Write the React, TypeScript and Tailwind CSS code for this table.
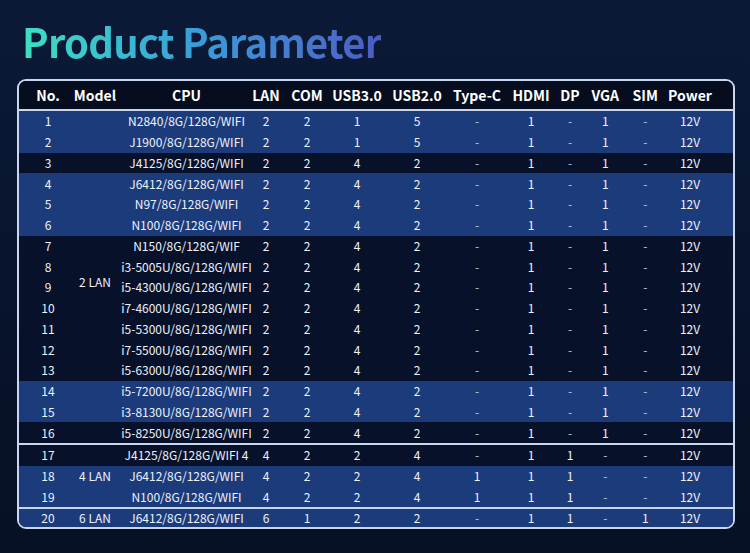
import React from 'react'

type Row = { no: number; cpu: string; vals: string[]; blue: boolean }

// column widths add up to the 714px inner width; padding nudges each centre
const cols = [
  { w: '52.5px', pad: 'pl-[5.5px]' },
  { w: '69.5px', pad: 'pr-[22.5px]' },
  { w: '85.5px', pad: 'pl-[5.5px]' },
  { w: '60px', pad: 'pl-[19px]' },
  { w: '45.5px', pad: 'pr-[4.5px]' },
  { w: '55px', pad: 'pr-[5px]' },
  { w: '60px', pad: '' },
  { w: '57px', pad: 'pl-[3px]' },
  { w: '46.5px', pad: 'pl-[7.5px]' },
  { w: '37px', pad: 'pl-[2px]' },
  { w: '37.5px', pad: 'pr-[2px]' },
  { w: '42.5px', pad: 'pr-[2px]' },
  { w: '65.5px', pad: 'pr-[20.5px]' },
]

const headers = ['No.', 'Model', 'CPU', 'LAN', 'COM', 'USB3.0', 'USB2.0', 'Type-C', 'HDMI', 'DP', 'VGA', 'SIM', 'Power']

const std = ['2', '2', '4', '2', '-', '1', '-', '1', '-', '12V']

const groups: { model: string; shift: string; rows: Row[] }[] = [
  {
    model: '2 LAN',
    shift: 'pt-[10px]',
    rows: [
      { no: 1, cpu: 'N2840/8G/128G/WIFI', vals: ['2', '2', '1', '5', '-', '1', '-', '1', '-', '12V'], blue: true },
      { no: 2, cpu: 'J1900/8G/128G/WIFI', vals: ['2', '2', '1', '5', '-', '1', '-', '1', '-', '12V'], blue: true },
      { no: 3, cpu: 'J4125/8G/128G/WIFI', vals: std, blue: false },
      { no: 4, cpu: 'J6412/8G/128G/WIFI', vals: std, blue: true },
      { no: 5, cpu: 'N97/8G/128G/WIFI', vals: std, blue: true },
      { no: 6, cpu: 'N100/8G/128G/WIFI', vals: std, blue: true },
      { no: 7, cpu: 'N150/8G/128G/WIF', vals: std, blue: false },
      { no: 8, cpu: 'i3-5005U/8G/128G/WIFI', vals: std, blue: false },
      { no: 9, cpu: 'i5-4300U/8G/128G/WIFI', vals: std, blue: false },
      { no: 10, cpu: 'i7-4600U/8G/128G/WIFI', vals: std, blue: false },
      { no: 11, cpu: 'i5-5300U/8G/128G/WIFI', vals: std, blue: false },
      { no: 12, cpu: 'i7-5500U/8G/128G/WIFI', vals: std, blue: false },
      { no: 13, cpu: 'i5-6300U/8G/128G/WIFI', vals: std, blue: false },
      { no: 14, cpu: 'i5-7200U/8G/128G/WIFI', vals: std, blue: true },
      { no: 15, cpu: 'i3-8130U/8G/128G/WIFI', vals: std, blue: true },
      { no: 16, cpu: 'i5-8250U/8G/128G/WIFI', vals: std, blue: false },
    ],
  },
  {
    model: '4 LAN',
    shift: '',
    rows: [
      { no: 17, cpu: 'J4125/8G/128G/WIFI 4', vals: ['4', '2', '2', '4', '-', '1', '1', '-', '-', '12V'], blue: false },
      { no: 18, cpu: 'J6412/8G/128G/WIFI', vals: ['4', '2', '2', '4', '1', '1', '1', '-', '-', '12V'], blue: true },
      { no: 19, cpu: 'N100/8G/128G/WIFI', vals: ['4', '2', '2', '4', '1', '1', '1', '-', '-', '12V'], blue: true },
    ],
  },
  {
    model: '6 LAN',
    shift: '',
    rows: [
      { no: 20, cpu: 'J6412/8G/128G/WIFI', vals: ['6', '1', '2', '2', '-', '1', '1', '-', '1', '12V'], blue: true },
    ],
  },
]

const gridCols = 'grid grid-cols-[52.5px_69.5px_85.5px_60px_45.5px_55px_60px_57px_46.5px_37px_37.5px_42.5px_65.5px]'

const App: React.FC = () => {
  return (
    <div
      className="w-[750px] h-[553px] overflow-hidden bg-gradient-to-b from-[#0c1a37] via-[#08142d] to-[#061025] pt-[21px] pl-[17px]"
      style={{ fontFamily: '"Noto Sans CJK SC", "Noto Sans", sans-serif' }}
    >
      <h1 className="ml-[5px] text-[40px] leading-[40px] font-bold tracking-[-0.8px] bg-gradient-to-r from-[#3fe0c2] via-[#3a9bd9] to-[#4a5cc4] bg-clip-text text-transparent w-max">
        Product Parameter
      </h1>

      <div className="mt-[18px] w-[718px] border-2 border-[#c9d7ee] rounded-[9px] overflow-hidden text-[#eef2fa]">
        <div className={`${gridCols} h-[30px] bg-[#050d1e] border-b-2 border-[#c9d7ee] text-[14px] font-bold text-white`}>
          {headers.map((h, i) => (
            <div key={h} className={`flex items-center justify-center whitespace-nowrap ${cols[i].pad}`}>
              {h}
            </div>
          ))}
        </div>

        {groups.map((g, gi) => (
          <div key={g.model} className={`relative ${gi > 0 ? 'border-t-2 border-[#c9d7ee]' : ''}`}>
            {g.rows.map((r) => (
              <div
                key={r.no}
                className={`${gridCols} ${r.no === 20 ? 'h-[18px]' : 'h-[20.75px]'} text-[12px] ${r.blue ? 'bg-[#1c3b7b]' : 'bg-[#07112a]'}`}
              >
                <div className={`flex items-center justify-center ${cols[0].pad}`}>{r.no}</div>
                <div />
                <div className={`flex items-center justify-center whitespace-nowrap ${cols[2].pad}`}>{r.cpu}</div>
                {r.vals.map((v, vi) => (
                  <div
                    key={vi}
                    className={`flex items-center justify-center whitespace-nowrap ${cols[vi + 3].pad} ${v === '-' ? 'text-[#b9c6dc]' : ''}`}
                  >
                    {v}
                  </div>
                ))}
              </div>
            ))}
            <div className={`absolute top-0 bottom-0 left-[52.5px] w-[69.5px] pr-[22.5px] flex items-center justify-center text-[12px] whitespace-nowrap ${g.shift}`}>
              {g.model}
            </div>
          </div>
        ))}
      </div>
    </div>
  )
}

export default App
